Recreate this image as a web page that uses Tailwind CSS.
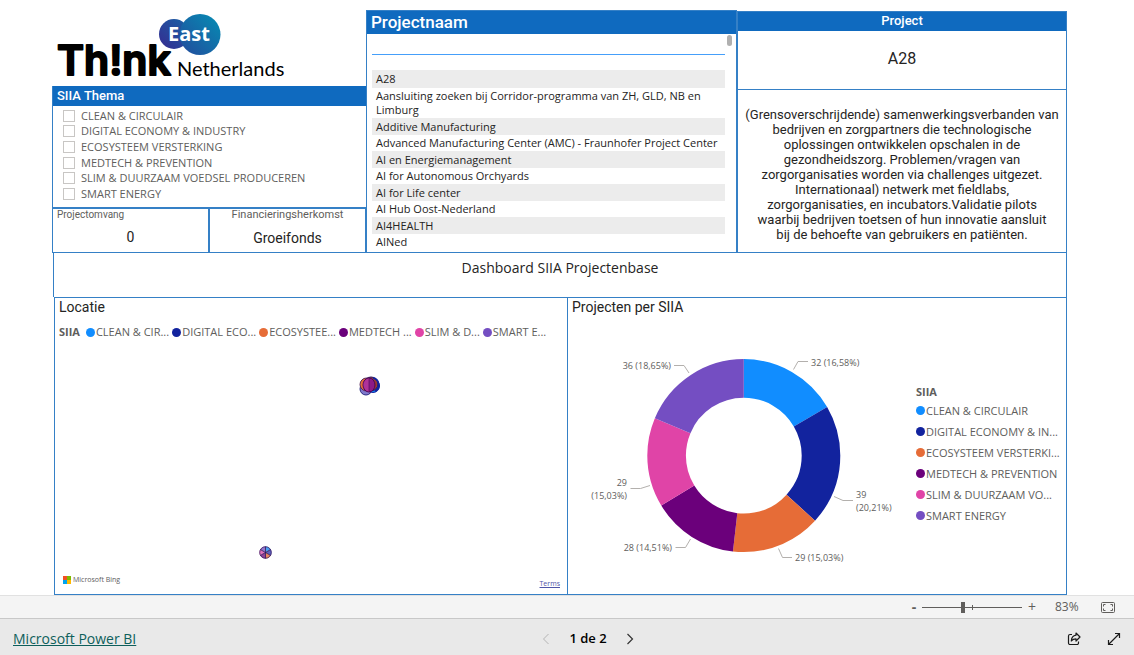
<!DOCTYPE html>
<html lang="nl">
<head>
<meta charset="utf-8">
<meta name="viewport" content="width=device-width, initial-scale=1">
<title>Dashboard SIIA Projectenbase</title>
<script src="https://cdn.jsdelivr.net/npm/@tailwindcss/browser@4"></script>
</head>
<body class="min-h-screen flex flex-col bg-white font-['Open_Sans',sans-serif] text-[11px] text-[#252423]">

<main class="flex-1 flex flex-col pl-[52px] pr-[67px]">
  <div class="grid grid-cols-[314fr_371fr_330fr]">

    <!-- Logo, theme filter and key figures -->
    <div class="flex flex-col">
      <svg class="w-60 h-[86px]" viewBox="52 0 240 86" role="img" aria-label="Th!nk East Netherlands">
        <defs>
          <linearGradient id="bubbleA" x1="0" y1="1" x2="1" y2="0"><stop offset="0" stop-color="#372a90"/><stop offset="1" stop-color="#1763a6"/></linearGradient>
          <linearGradient id="bubbleB" x1="0" y1="1" x2="1" y2="0"><stop offset="0" stop-color="#234a9c"/><stop offset="1" stop-color="#058eb4"/></linearGradient>
        </defs>
        <circle cx="174" cy="34" r="15" fill="url(#bubbleA)"/>
        <circle cx="200" cy="34.500" r="20.500" fill="url(#bubbleB)"/>
        <text x="168" y="41" font-family="Open Sans" font-weight="700" font-size="20" fill="#fff">East</text>
        <text x="57" y="75" font-family="Inter" font-weight="600" font-size="41" fill="#000" stroke="#000" stroke-width="2" stroke-linejoin="round">Th!nk</text>
        <text x="177" y="76" font-family="Lato" font-size="20" fill="#000">Netherlands</text>
      </svg>

      <section class="flex flex-col border-l border-[#3580c6] flex-1 pb-[5px]" aria-labelledby="thema">
        <h2 id="thema" class="h-5 leading-5 pl-1 bg-[#0f6abf] text-white font-['Roboto',sans-serif] font-medium text-[13px]">SIIA Thema</h2>
        <div class="grid grid-rows-6 h-[94px] mt-[2px] pl-[10px] text-[#605e5c]">
          <label class="flex items-center gap-[6px]"><input type="checkbox" class="appearance-none size-[12px] border border-[#c8c6c4]">CLEAN &amp; CIRCULAIR</label>
          <label class="flex items-center gap-[6px]"><input type="checkbox" class="appearance-none size-[12px] border border-[#c8c6c4]">DIGITAL ECONOMY &amp; INDUSTRY</label>
          <label class="flex items-center gap-[6px]"><input type="checkbox" class="appearance-none size-[12px] border border-[#c8c6c4]">ECOSYSTEEM VERSTERKING</label>
          <label class="flex items-center gap-[6px]"><input type="checkbox" class="appearance-none size-[12px] border border-[#c8c6c4]">MEDTECH &amp; PREVENTION</label>
          <label class="flex items-center gap-[6px]"><input type="checkbox" class="appearance-none size-[12px] border border-[#c8c6c4]">SLIM &amp; DUURZAAM VOEDSEL PRODUCEREN</label>
          <label class="flex items-center gap-[6px]"><input type="checkbox" class="appearance-none size-[12px] border border-[#c8c6c4]">SMART ENERGY</label>
        </div>
      </section>
      <div class="grid grid-cols-2 h-[46px] font-['Roboto',sans-serif] border-t-2 border-[#3580c6]">
        <div class="flex flex-col border-x border-b border-[#3580c6]">
          <h3 class="text-[10px] leading-3 pl-1 text-[#605e5c]">Projectomvang</h3>
          <p class="text-center text-[14px] leading-5 mt-[6px]">0</p>
        </div>
        <div class="flex flex-col border-x border-b border-[#3580c6]">
          <h3 class="text-[11px] leading-3 text-center text-[#605e5c]">Financieringsherkomst</h3>
          <p class="text-center text-[14px] leading-5 mt-[7px]">Groeifonds</p>
        </div>
      </div>
    </div>

    <!-- Project names -->
    <section class="flex flex-col mt-[10px] border border-[#3580c6]">
      <h2 class="h-[23px] leading-[22px] pl-1 bg-[#0f6abf] text-white font-['Roboto',sans-serif] font-medium text-[17px]">Projectnaam</h2>
      <div class="flex-1 flex items-start justify-between pl-[5px] pr-1">
        <div class="flex-1 pr-[2px]">
          <div class="border-b border-[#459ffa]"><input type="text" aria-label="Zoek projectnaam" class="block w-full h-5 outline-none px-1"></div>
          <table class="w-full mt-[15px] leading-[14px] text-left">
            <tbody>
              <tr class="h-[18px] bg-[#ececec]"><td class="pl-1">A28</td></tr>
              <tr class="h-[30px]"><td class="pl-1 pr-4">Aansluiting zoeken bij Corridor-programma van ZH, GLD, NB en Limburg</td></tr>
              <tr class="h-[17px] bg-[#ececec]"><td class="pl-1">Additive Manufacturing</td></tr>
              <tr class="h-4"><td class="pl-1">Advanced Manufacturing Center (AMC) - Fraunhofer Project Center</td></tr>
              <tr class="h-[17px] bg-[#ececec]"><td class="pl-1">AI en Energiemanagement</td></tr>
              <tr class="h-4"><td class="pl-1">AI for Autonomous Orchyards</td></tr>
              <tr class="h-[17px] bg-[#ececec]"><td class="pl-1">AI for Life center</td></tr>
              <tr class="h-4"><td class="pl-1">AI Hub Oost-Nederland</td></tr>
              <tr class="h-[17px] bg-[#ececec]"><td class="pl-1">AI4HEALTH</td></tr>
              <tr class="h-4"><td class="pl-1">AINed</td></tr>
            </tbody>
          </table>
        </div>
        <div class="w-[5px] h-[11px] mt-px rounded-full bg-[#b0b0b0]"></div>
      </div>
    </section>

    <!-- Selected project -->
    <section class="flex flex-col mt-[11px] border border-[#3580c6] text-center font-['Roboto',sans-serif]">
      <h2 class="h-[19px] leading-[18px] bg-[#0f6abf] text-white font-medium text-[13px]">Project</h2>
      <p class="h-[59px] flex items-center justify-center text-[16px] pb-[2px] border-b border-[#3580c6]">A28</p>
      <p class="flex-1 flex flex-col justify-center pt-[6px] text-[13px] leading-[15px]">
        <span>(Grensoverschrijdende) samenwerkingsverbanden van</span>
        <span>bedrijven en zorgpartners die technologische</span>
        <span>oplossingen ontwikkelen opschalen in de</span>
        <span>gezondheidszorg. Problemen/vragen van</span>
        <span>zorgorganisaties worden via challenges uitgezet.</span>
        <span>Internationaal) netwerk met fieldlabs,</span>
        <span>zorgorganisaties, en incubators.Validatie pilots</span>
        <span>waarbij bedrijven toetsen of hun innovatie aansluit</span>
        <span>bij de behoefte van gebruikers en patiënten.</span>
      </p>
    </section>
  </div>

  <h1 class="h-11 pt-[5px] ml-px border-x border-[#3580c6] text-center text-[14px] leading-5">Dashboard SIIA Projectenbase</h1>

  <div class="flex-1 ml-[2px] grid grid-cols-[514fr_499fr] border border-[#3580c6]">
    <!-- Map -->
    <section class="flex flex-col border-r border-[#3580c6]">
      <h2 class="pl-1 leading-[18px] text-[14px] font-['Roboto',sans-serif]">Locatie</h2>
      <ul class="flex items-center gap-[3px] pl-1 mt-2 leading-4 text-[#605e5c]">
        <li class="font-bold mr-[3px]">SIIA</li>
        <li class="flex items-center gap-px"><i class="size-[9px] rounded-full bg-[#118dff]"></i>CLEAN &amp; CIR...</li>
        <li class="flex items-center gap-px"><i class="size-[9px] rounded-full bg-[#12239e]"></i>DIGITAL ECO...</li>
        <li class="flex items-center gap-px"><i class="size-[9px] rounded-full bg-[#e66c37]"></i>ECOSYSTEE...</li>
        <li class="flex items-center gap-px"><i class="size-[9px] rounded-full bg-[#6b007b]"></i>MEDTECH ...</li>
        <li class="flex items-center gap-px"><i class="size-[9px] rounded-full bg-[#e044a7]"></i>SLIM &amp; D...</li>
        <li class="flex items-center gap-px"><i class="size-[9px] rounded-full bg-[#744ec2]"></i>SMART E...</li>
      </ul>
      <div class="relative flex-1 flex items-end justify-between pl-2 pr-[7px] pb-[6px]">
        <svg class="absolute left-[303px] top-[34px] w-6 h-6" viewBox="0 0 24 24" aria-hidden="true">
          <circle cx="8" cy="15" r="6" fill="#7f78cc" stroke="#2a2a80"/>
          <circle cx="15" cy="12" r="6.500" fill="#118dff" stroke="#12239e"/>
          <circle cx="8.500" cy="10.500" r="6.500" fill="#e66c37" stroke="#5a2a5e"/>
          <circle cx="13" cy="10" r="7" fill="#a0382c" stroke="#25145e"/>
          <path d="M15 4a7 7 0 0 1 2 13" fill="none" stroke="#12239e" stroke-width="2"/>
          <ellipse cx="11" cy="11" rx="6" ry="7" fill="#8c1a86" stroke="#4a0757"/>
          <path d="M11 4.500a5.500 6.500 0 0 0 0 13z" fill="#b0329a"/>
          <path d="M11 4.500v13" stroke="#4a0757" stroke-width=".6"/>
        </svg>
        <svg class="absolute left-[204px] top-[206px] w-[13px] h-[13px]" viewBox="-6.500 -6.500 13 13" aria-hidden="true">
          <path d="M0 0V-6A6 6 0 0 1 5.200-3z" fill="#4ba0f0"/>
          <path d="M0 0L5.200-3A6 6 0 0 1 5.200 3z" fill="#5c62bd"/>
          <path d="M0 0L5.200 3A6 6 0 0 1 0 6z" fill="#e8875e"/>
          <path d="M0 0V6A6 6 0 0 1-5.200 3z" fill="#8f4199"/>
          <path d="M0 0L-5.200 3A6 6 0 0 1-5.200-3z" fill="#e272bb"/>
          <path d="M0 0L-5.200-3A6 6 0 0 1 0-6z" fill="#9378cd"/>
          <path d="M0-6V6M-5.200-3L5.200 3M-5.200 3L5.200-3" stroke="#2b1457" stroke-width=".8"/>
          <circle r="5.800" fill="none" stroke="#3a1a62" stroke-width=".8"/>
        </svg>
        <div class="flex items-center gap-[2px] text-[7px] leading-4 text-[#606060]">
          <svg class="size-2" viewBox="0 0 8 8" aria-hidden="true"><path d="M0 0h4v4H0z" fill="#f25022"/><path d="M4 0h4v4H4z" fill="#7fba00"/><path d="M0 4h4v4H0z" fill="#00a4ef"/><path d="M4 4h4v4H4z" fill="#ffb900"/></svg>
          <span>Microsoft Bing</span>
        </div>
        <a href="#" class="text-[7px] leading-[9px] text-[#4f55a8] underline">Terms</a>
      </div>
    </section>

    <!-- Donut -->
    <section class="flex flex-col">
      <h2 class="pl-1 leading-[18px] text-[14px] font-['Roboto',sans-serif]">Projecten per SIIA</h2>
      <div class="flex items-start">
        <svg class="w-[335px] h-[230px] mt-6 mr-[13px]" viewBox="568 340 335 230" font-family="Open Sans" font-size="9" fill="#605e5c" role="img" aria-label="Projecten per SIIA">
          <g fill="none" stroke-width="38.600" transform="rotate(-90 743.800 455.600)">
            <circle cx="743.800" cy="455.600" r="77.200" pathLength="193" stroke="#118dff" stroke-dasharray="32 161"/>
            <circle cx="743.800" cy="455.600" r="77.200" pathLength="193" stroke="#12239e" stroke-dasharray="39 154" stroke-dashoffset="-32"/>
            <circle cx="743.800" cy="455.600" r="77.200" pathLength="193" stroke="#e66c37" stroke-dasharray="29 164" stroke-dashoffset="-71"/>
            <circle cx="743.800" cy="455.600" r="77.200" pathLength="193" stroke="#6b007b" stroke-dasharray="28 165" stroke-dashoffset="-100"/>
            <circle cx="743.800" cy="455.600" r="77.200" pathLength="193" stroke="#e044a7" stroke-dasharray="29 164" stroke-dashoffset="-128"/>
            <circle cx="743.800" cy="455.600" r="77.200" pathLength="193" stroke="#744ec2" stroke-dasharray="36 157" stroke-dashoffset="-157"/>
          </g>
          <g fill="none" stroke="#b3b0ad">
            <path d="M793.500 369.500l4.500-8h10M834 496.500l9 4h10M778.500 548.500l4 9h9.500M690.500 539l-5 8.500h-10M650 485.500l-9.500 3h-10M689 373l-5-7.500h-10"/>
          </g>
          <text x="811" y="366">32 (16,58%)</text>
          <text x="856" y="498">39</text><text x="856" y="511">(20,21%)</text>
          <text x="795" y="561">29 (15,03%)</text>
          <text x="672" y="551" text-anchor="end">28 (14,51%)</text>
          <text x="627" y="486" text-anchor="end">29</text><text x="627" y="499" text-anchor="end">(15,03%)</text>
          <text x="671" y="369" text-anchor="end">36 (18,65%)</text>
        </svg>
        <ul class="mt-[68px] text-[#605e5c] leading-[21px]">
          <li class="font-bold leading-4">SIIA</li>
          <li class="flex items-center gap-px"><i class="size-[9px] rounded-full bg-[#118dff]"></i>CLEAN &amp; CIRCULAIR</li>
          <li class="flex items-center gap-px"><i class="size-[9px] rounded-full bg-[#12239e]"></i>DIGITAL ECONOMY &amp; IN...</li>
          <li class="flex items-center gap-px"><i class="size-[9px] rounded-full bg-[#e66c37]"></i>ECOSYSTEEM VERSTERKI...</li>
          <li class="flex items-center gap-px"><i class="size-[9px] rounded-full bg-[#6b007b]"></i>MEDTECH &amp; PREVENTION</li>
          <li class="flex items-center gap-px"><i class="size-[9px] rounded-full bg-[#e044a7]"></i>SLIM &amp; DUURZAAM VO...</li>
          <li class="flex items-center gap-px"><i class="size-[9px] rounded-full bg-[#744ec2]"></i>SMART ENERGY</li>
        </ul>
      </div>
    </section>
  </div>
</main>

<!-- Zoom bar -->
<div class="h-[23px] flex items-center justify-end pr-[19px] bg-[#f4f4f4] border-t border-[#e1e1e1] text-[#605e5c]">
  <button type="button" aria-label="Uitzoomen" class="w-2 text-[14px] leading-5 font-bold">-</button>
  <div class="relative flex items-center w-[100px] mx-1">
    <input type="range" min="0" max="100" value="41" aria-label="Zoom" class="appearance-none w-full h-[11px] bg-transparent [&::-webkit-slider-runnable-track]:h-px [&::-webkit-slider-runnable-track]:bg-[#605e5c] [&::-webkit-slider-thumb]:appearance-none [&::-webkit-slider-thumb]:w-1 [&::-webkit-slider-thumb]:h-[11px] [&::-webkit-slider-thumb]:mt-[-5px] [&::-webkit-slider-thumb]:bg-[#605e5c]">
    <i class="absolute left-[50px] top-[3px] w-px h-[5px] bg-[#605e5c]"></i>
  </div>
  <button type="button" aria-label="Inzoomen" class="w-3 text-[14px] leading-5">+</button>
  <span class="ml-[17px] w-6 text-[12px]">83%</span>
  <button type="button" aria-label="Aanpassen aan pagina" class="ml-[22px]">
    <svg class="w-[14px] h-[11px]" viewBox="0 0 14 11" fill="none" stroke="#605e5c" aria-hidden="true"><rect x=".5" y=".5" width="13" height="10" rx="1"/><path d="M2.500 4.500v-2h2M9.500 2.500h2v2M11.500 6.500v2h-2M4.500 8.500h-2v-2"/></svg>
  </button>
</div>

<!-- Page navigation -->
<footer class="h-[37px] grid grid-cols-3 items-center px-[13px] pt-[3px] bg-[#e9e9e9] border-t border-[#c8c8c8]">
  <a href="#" class="justify-self-start text-[14px] text-[#0e5f5b] underline">Microsoft Power BI</a>
  <nav class="justify-self-center pl-[42px] flex items-center gap-[19px] text-[13px] font-semibold text-black">
    <button type="button" aria-label="Vorige pagina"><svg class="w-2 h-3" viewBox="0 0 8 12" fill="none" stroke="#b5b5b5" aria-hidden="true"><path d="M6.500 1L1.500 6l5 5"/></svg></button>
    <span>1 de 2</span>
    <button type="button" aria-label="Volgende pagina"><svg class="w-2 h-3" viewBox="0 0 8 12" fill="none" stroke="#333" stroke-width="1.200" aria-hidden="true"><path d="M1.500 1l5 5-5 5"/></svg></button>
  </nav>
  <div class="justify-self-end flex items-center gap-[26px]">
    <button type="button" aria-label="Delen"><svg class="size-[14px]" viewBox="0 0 14 14" fill="none" stroke="#1b1b1b" stroke-width="1.200" stroke-linejoin="round" aria-hidden="true"><path d="M5 2.500H3A1.500 1.500 0 0 0 1.500 4v7A1.500 1.500 0 0 0 3 12.500h7a1.500 1.500 0 0 0 1.500-1.500V9.500"/><path d="M9 1l4 4-4 4V6.800c-2.200 0-3.500.6-4.700 2.200.2-3.200 1.700-5.400 4.700-5.800z"/></svg></button>
    <button type="button" aria-label="Volledig scherm"><svg class="size-[14px]" viewBox="0 0 14 14" fill="none" stroke="#1b1b1b" stroke-width="1.200" aria-hidden="true"><path d="M1.500 12.500l11-11M8 1.500h4.500V6M1.500 8v4.500H6"/></svg></button>
  </div>
</footer>
</body>
</html>
